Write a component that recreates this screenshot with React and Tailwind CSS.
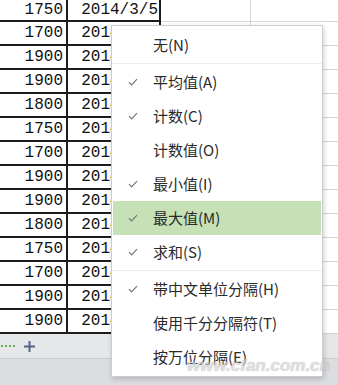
const rows = [1750, 1700, 1900, 1900, 1800, 1750, 1700, 1900, 1900, 1800, 1750, 1700, 1900, 1900]

const items = [
  { label: '无(N)', check: false, sep: true },
  { label: '平均值(A)', check: true },
  { label: '计数(C)', check: true },
  { label: '计数值(O)', check: false },
  { label: '最小值(I)', check: true },
  { label: '最大值(M)', check: true, active: true },
  { label: '求和(S)', check: true, sep: true },
  { label: '带中文单位分隔(H)', check: true },
  { label: '使用千分分隔符(T)', check: false },
  { label: '按万位分隔(E)', check: false },
]

function Check() {
  return (
    <svg width="10" height="8" viewBox="0 0 10 8" fill="none">
      <path d="M1 4.2 L3.6 6.8 L9 1.2" stroke="#777" strokeWidth="1.2" />
    </svg>
  )
}

// ─── Sheet grid ───────────────────────────────────────────────────────────────

function Sheet() {
  return (
    <div className="flex flex-col" style={{ fontFamily: '"Liberation Mono", monospace' }}>
      {rows.map((v, i) => (
        <div key={i} className={i === 0 ? 'flex h-[22px]' : 'flex h-[24px]'}>
          <div className="w-[68px] border-r-2 border-b-2 border-[#1c1c1c] flex items-center justify-end pr-[3px] text-[16px] text-[#111]">
            {v}
          </div>
          <div className="w-[93px] border-r-2 border-b-2 border-[#1c1c1c] flex items-center justify-end pr-[1px] text-[16px] text-[#111]">
            2014/3/5
          </div>
          <div className="w-[90px] border-r border-b border-[#d6d6d6]" />
          <div className="flex-1 border-b border-[#d6d6d6]" />
        </div>
      ))}
    </div>
  )
}

// ─── Page ─────────────────────────────────────────────────────────────────────

export default function App() {
  return (
    <div className="relative w-[338px] h-[385px] overflow-hidden bg-white">
      <Sheet />

      {/* sheet tabs */}
      <div className="h-[24px] bg-[#e6e7e9] flex items-center">
        <div className="flex gap-[2px] ml-[1px]">
          <span className="w-[2px] h-[2px] bg-[#6aae4c]" />
          <span className="w-[2px] h-[2px] bg-[#6aae4c]" />
          <span className="w-[2px] h-[2px] bg-[#6aae4c]" />
          <span className="w-[2px] h-[2px] bg-[#6aae4c]" />
        </div>
        <svg className="ml-[8px]" width="13" height="13" viewBox="0 0 13 13">
          <path d="M6.5 1 V12 M1 6.5 H12" stroke="#56648a" strokeWidth="2" />
        </svg>
      </div>
      <div className="h-[30px] bg-[#dcdde0] border-t border-[#cbccce]" />

      {/* status bar menu */}
      <div
        className="absolute left-[111px] top-[25px] w-[212px] bg-white border border-[#cdcdcd] py-[2px] shadow-[1px_2px_5px_rgba(0,0,0,0.18)]"
        style={{ fontFamily: '"Noto Sans CJK SC", sans-serif' }}
      >
        {items.map((it) => (
          <div key={it.label}>
            <div className={it.active ? 'h-[34px] mx-[1px] flex items-center bg-[#c6e1b5]' : 'h-[34px] mx-[1px] flex items-center'}>
              <div className="w-[40px] pl-[15px] flex items-center">{it.check && <Check />}</div>
              <span className="text-[15px] text-[#2a2a2a]">{it.label}</span>
            </div>
            {it.sep && <div className="h-[3px] flex items-center"><div className="h-px w-full bg-[#ececec]" /></div>}
          </div>
        ))}
      </div>

      {/* watermark */}
      <div
        className="absolute left-[187px] top-[357px] text-[17px] leading-none italic font-bold text-[#d2d2d2] opacity-70"
        style={{ fontFamily: '"Liberation Sans", sans-serif', textShadow: '0 0 1px #a0a0a0' }}
      >
        www.cfan.com.cn
      </div>
    </div>
  )
}
